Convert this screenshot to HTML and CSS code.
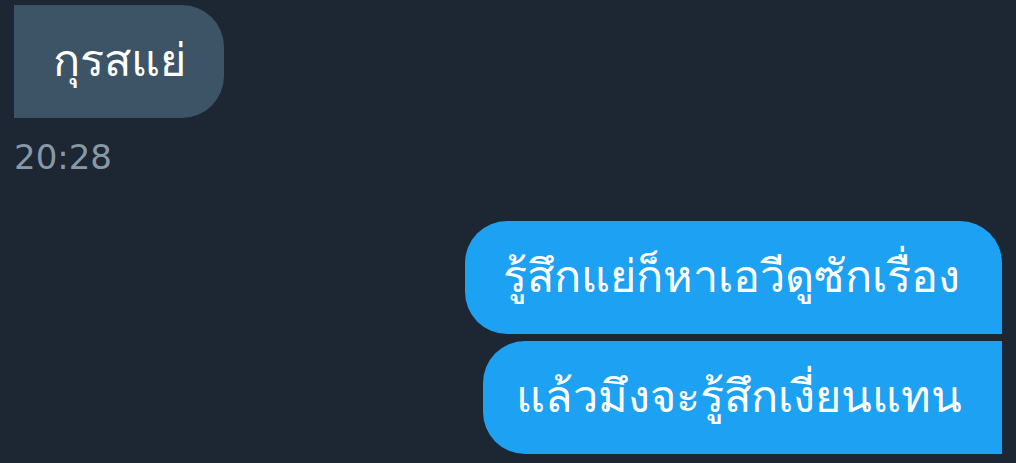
FILE: index.html
```html
<!DOCTYPE html>
<html lang="th">
<head>
<meta charset="utf-8">
<link rel="stylesheet" href="styles.css">
</head>
<body>
<div class="chat">
  <div class="group received">
    <div class="bubble bubble-in">กุรสแย่</div>
    <div class="time">20:28</div>
  </div>
  <div class="group sent">
    <div class="bubble bubble-out first">รู้สึกแย่ก็หาเอวีดูซักเรื่อง</div>
    <div class="bubble bubble-out last">แล้วมึงจะรู้สึกเงี่ยนแทน</div>
  </div>
</div>
</body>
</html>
```
FILE: styles.css
```css
html, body {
  margin: 0;
  padding: 0;
  background: #1c2733;
  height: 100%;
}
.chat {
  display: flex;
  flex-direction: column;
  padding: 5px 14px 0 14px;
  font-family: "Noto Sans", "DejaVu Sans", sans-serif;
}
.group {
  display: flex;
  flex-direction: column;
}
.received {
  align-items: flex-start;
}
.sent {
  align-items: flex-end;
  margin-top: 44px;
  gap: 7px;
}
.bubble {
  color: #ffffff;
  font-size: 45px;
  line-height: 56px;
  padding: 26px 38px 31px 39px;
  box-sizing: border-box;
  height: 113px;
  white-space: nowrap;
}
.bubble-in {
  background: #3d5466;
  border-radius: 0 42px 42px 0;
}
.bubble-out {
  background: #1da1f2;
}
.bubble-out.first {
  border-radius: 42px 42px 0 42px;
  padding-left: 38px;
  padding-right: 42px;
}
.bubble-out.last {
  border-radius: 42px 0 0 42px;
  padding-left: 33px;
  padding-right: 40px;
}
.time {
  color: #8899a6;
  font-size: 34px;
  margin-top: 19px;
  line-height: 40px;
  font-family: "DejaVu Sans", sans-serif;
}
```
